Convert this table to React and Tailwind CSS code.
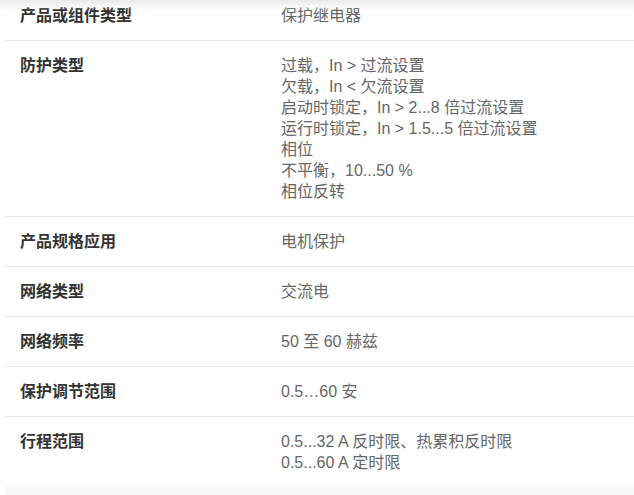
const specs = [
  { label: "产品或组件类型", values: ["保护继电器"] },
  {
    label: "防护类型",
    values: [
      "过载，In > 过流设置",
      "欠载，In < 欠流设置",
      "启动时锁定，In > 2...8 倍过流设置",
      "运行时锁定，In > 1.5...5 倍过流设置",
      "相位",
      "不平衡，10...50 %",
      "相位反转",
    ],
  },
  { label: "产品规格应用", values: ["电机保护"] },
  { label: "网络类型", values: ["交流电"] },
  { label: "网络频率", values: ["50 至 60 赫兹"] },
  { label: "保护调节范围", values: ["0.5…60 安"] },
  {
    label: "行程范围",
    values: ["0.5...32 A 反时限、热累积反时限", "0.5...60 A 定时限"],
  },
];

const App = () => {
  return (
    <div
      className="relative w-[634px] h-[495px] overflow-hidden bg-white"
      style={{ fontFamily: '"Liberation Sans", "Noto Sans CJK SC", sans-serif' }}
    >
      {/* shadow from the header above */}
      <div className="absolute top-0 left-0 right-0 h-[10px] bg-linear-to-b from-[#e9e9e9] to-transparent z-10" />

      <div className="ml-[5px] -mt-[9px]">
        {specs.map((row, index) => (
          <div
            key={index}
            className={
              "grid grid-cols-[276px_1fr] py-[14px] " +
              (index < specs.length - 1 ? "border-b border-[#e6e6e6]" : "")
            }
          >
            <div className="pl-[15px] text-[16px] leading-[21px] font-semibold text-[#333333]">
              {row.label}
            </div>
            <div className="text-[16px] leading-[21px] text-[#666666]">
              {row.values.map((v, i) => (
                <div key={i}>{v}</div>
              ))}
            </div>
          </div>
        ))}

        {/* next row, cut off by the window */}
        <div className="h-[30px] bg-[#f7f7f7]" />
      </div>
    </div>
  );
};

export default App;
